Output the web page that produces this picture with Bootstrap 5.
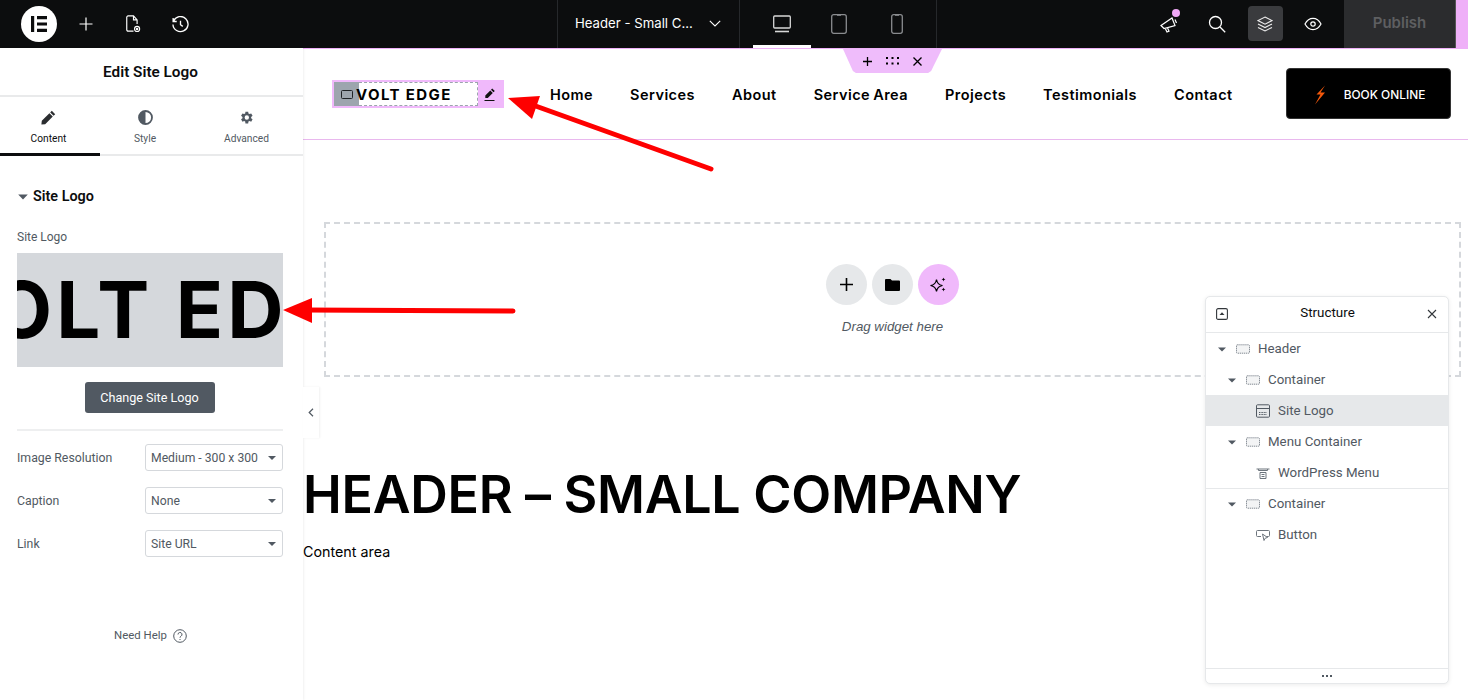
<!DOCTYPE html>
<html lang="en">
<head>
<meta charset="UTF-8">
<meta name="viewport" content="width=device-width, initial-scale=1.0">
<title>Edit Site Logo</title>
<link href="https://cdn.jsdelivr.net/npm/bootstrap@5.3.0/dist/css/bootstrap.min.css" rel="stylesheet">
<style>
body { font-family: Roboto, "Liberation Sans", sans-serif; background: #fff; overflow: hidden; }
.app-shell { height: 700px; position: relative; overflow: hidden; }

/* top bar */
.top-bar { height: 48px; background: #0c0d0e; color: #fff; }
.top-left { width: 557px; padding-left: 21px; gap: 13px; }
.logo-round { width: 36px; height: 36px; border-radius: 50%; background: #fff; margin-right: -1px; }
.top-tool { width: 34px; height: 32px; }
.doc-switch { width: 183px; height: 48px; border-left: 1px solid #26282b; border-right: 1px solid #26282b; padding: 0 18px 1px 17px; font-family: Inter, Roboto, sans-serif; font-size: 13.2px; }
.device-group { width: 197px; height: 48px; border-right: 1px solid #26282b; padding-left: 13px; }
.device-btn { width: 57.5px; height: 48px; position: relative; }
.device-btn.is-on::after { content: ""; position: absolute; left: 0; right: 0; bottom: 0; height: 3px; background: #fff; }
.tool-wrap { width: 48px; height: 48px; position: relative; padding-bottom: 1px; }
.tool-on { width: 35px; height: 35px; background: #3a3b3e; border-radius: 4px; }
.pink-dot { position: absolute; width: 8px; height: 8px; background: #f0a8f6; border-radius: 50%; top: 9px; left: 27px; }
.publish-box { width: 111px; height: 48px; background: #2b2c2e; color: #5e5f61; font-family: Inter, Roboto, sans-serif; font-weight: 600; font-size: 15px; margin-left: 7px; padding-bottom: 1px; }
.pink-end { width: 13px; height: 48px; background: #efb0f8; border-left: 1px solid #555; }

/* sidebar */
.work-area { height: 652px; }
.side-panel { width: 303px; flex-shrink: 0; background: #fff; color: #515962; font-size: 12px; box-shadow: 1px 0 2px rgba(0,0,0,.06); z-index: 2; }
.panel-title { height: 49px; border-bottom: 2px solid #e9eaeb; color: #0c0d0e; font-size: 15.3px; font-weight: 600; padding: 2px 2px 0 0; }
.panel-tabs { height: 59px; border-bottom: 2px solid #e9eaeb; }
.panel-tab { padding-top: 13px; font-size: 10.2px; position: relative; gap: 7px; line-height: 13px; }
.tab-a { width: 100px; padding-right: 3px; }
.tab-b { width: 90px; }
.tab-c { width: 113px; }
.panel-tab.is-on { color: #0c0d0e; }
.panel-tab.is-on::after { content: ""; position: absolute; left: 0; right: 0; bottom: -2px; height: 3px; background: #0c0d0e; }
.section-head { color: #0c0d0e; font-size: 14.4px; font-weight: 600; padding: 32px 17px 0 18px; line-height: 17px; gap: 5px; }
.field-name { padding: 24px 17px 0; font-size: 12px; line-height: 16px; }
.logo-preview { height: 114px; margin: 8px 20px 0 17px; background: #d5d8dc; overflow: hidden; white-space: nowrap; font-family: Inter, "Liberation Sans", sans-serif; font-weight: 700; font-size: 78px; letter-spacing: 4px; line-height: 114px; color: #000; text-indent: -84px; }
.change-wrap { margin-top: 15px; padding-right: 4px; }
.change-btn { width: 130px; height: 31px; background: #515962; color: #fff; border: 0; border-radius: 3px; font-size: 12.6px; padding: 1px 0 0; }
.change-btn:hover { background: #515962; color: #fff; }
.side-rule { border-top: 2px solid #eeeff0; margin: 16px 20px 13px 17px; }
.set-row { padding: 0 20px 0 17px; height: 27px; margin-bottom: 16px; }
.set-label { width: 128px; font-size: 12.3px; padding-top: 1px; }
.set-select { width: 138px; height: 27px; min-height: 27px; font-size: 12.2px; color: #515962; padding: 1px 18px 0 5px; border: 1px solid #d5d8dc; border-radius: 3px; background-image: url("data:image/svg+xml,%3Csvg xmlns='http://www.w3.org/2000/svg' viewBox='0 0 8 4'%3E%3Cpath d='M0 0h8L4 4z' fill='%23515962'/%3E%3C/svg%3E"); background-size: 8px 4px; background-position: right 6px center; font-family: Roboto, sans-serif; }
.help-line { margin-top: 70px; font-size: 11.4px; gap: 6px; padding-right: 2px; }

.collapse-tab { position: absolute; left: 303px; top: 387px; width: 16px; height: 51px; background: #fff; box-shadow: 1px 0 2px rgba(0,0,0,.06); z-index: 2; }

/* canvas */
.canvas-area { min-width: 0; position: relative; }
.site-header { height: 92px; border-top: 1px solid #efb0f8; border-bottom: 1px solid #e9b8ee; padding: 0 17px 0 29px; position: relative; }
.handle-tab { position: absolute; top: 0; left: 540px; width: 99px; height: 24px; background: #efbcfb; clip-path: polygon(0 0, 100% 0, 89% 92%, 86% 100%, 13% 100%, 10% 92%); gap: 14px; }
.logo-frame { width: 172px; height: 28px; background: #f0b9fb; padding: 2px; flex-shrink: 0; }
.logo-grip { width: 25px; height: 24px; background: #9da5ae; }
.logo-inner { width: 119px; height: 24px; background: #fff; border: 1px dashed #9da5ae; border-left: 0; font-family: Inter, "Liberation Sans", sans-serif; font-weight: 700; font-size: 15px; letter-spacing: 1.4px; color: #000; line-height: 24px; white-space: nowrap; }
.logo-word { margin-left: -3px; display: block; }
.logo-pen { flex: 1; }
.site-menu { margin: 2px 0 0 46px; gap: 37px; font-family: Inter, "Liberation Sans", sans-serif; font-weight: 600; font-size: 14.5px; letter-spacing: .45px; word-spacing: -1px; color: #000; white-space: nowrap; }
.book-btn { width: 165px; height: 51px; background: #000; color: #fff; border: 1px solid #333; border-radius: 4px; font-family: Inter, sans-serif; font-size: 11.9px; font-weight: 500; gap: 18px; margin: -2px 0 0 auto; padding: 3px 0 0 2px; flex-shrink: 0; }
.drop-zone { height: 155px; margin: 82px 7px 0 21px; border: 2px dashed #d5d8dc; padding-top: 40px; }
.drop-circle { width: 41px; height: 41px; border-radius: 50%; background: #e6e8ea; }
.drop-circle.is-pink { background: #f0b9fb; }
.drop-row { gap: 5px; }
.drop-hint { font-size: 13.3px; font-style: italic; color: #515962; margin-top: 14px; line-height: 16px; font-family: "Liberation Sans", sans-serif; }
.page-title { font-family: Inter, "Liberation Sans", sans-serif; font-weight: 600; font-size: 52px; letter-spacing: -.3px; line-height: 62px; margin: 87px 0 0; color: #000; white-space: nowrap; }
.page-copy { font-family: Inter, "Liberation Sans", sans-serif; font-size: 14.3px; margin: 16px 0 0; color: #000; line-height: 20px; }

/* structure window */
.tree-window { position: absolute; left: 1205px; top: 296px; width: 244px; height: 388px; background: #fff; border: 1px solid #e6e8ea; border-radius: 5px; box-shadow: 0 1px 4px rgba(0,0,0,.08); z-index: 3; color: #515962; font-size: 13.3px; }
.tree-head { height: 36px; border-bottom: 1px solid #e6e8ea; padding: 0 11px 2px 10px; color: #0c0d0e; font-size: 13.4px; }
.tree-row { height: 31px; gap: 8px; padding-top: 1px; }
.tree-row.is-picked { background: #e6e8ea; }
.tree-row.has-line { border-top: 1px solid #e6e8ea; padding-top: 0; }
.tree-caret { margin-right: 2px; }
.lvl-0 { padding-left: 12px; }
.lvl-1 { padding-left: 22px; }
.lvl-2 { padding-left: 50px; }
.tree-foot { position: absolute; left: 0; right: 0; bottom: 0; height: 15px; border-top: 1px solid #e6e8ea; }
.arrow-layer { position: absolute; left: 0; top: 0; z-index: 5; pointer-events: none; }
</style>
</head>
<body>
<svg width="0" height="0" class="d-block position-absolute">
  <symbol id="ico-box" viewBox="0 0 14 10"><rect x=".5" y=".8" width="13" height="8.400" rx=".8" fill="#f3f4f5" stroke="#838a92" stroke-dasharray="1.300 .7"/></symbol>
  <symbol id="ico-caret" viewBox="0 0 8 5"><path d="M0 .5h8L4 4.500z" fill="#515962"/></symbol>
</svg>

<div class="app-shell">
  <div class="top-bar d-flex align-items-center">
    <div class="top-left d-flex align-items-center">
      <div class="logo-round d-flex align-items-center justify-content-center">
        <svg width="16" height="16" viewBox="0 0 16 16"><path d="M0 0h3.200v16H0zM6 0h10v3.200H6zM6 6.400h10v3.200H6zM6 12.800h10V16H6z" fill="#0c0d0e"/></svg>
      </div>
      <div class="top-tool d-flex align-items-center justify-content-center">
        <svg width="14" height="14" viewBox="0 0 14 14"><path d="M7 .5v13M.5 7h13" stroke="#fff" stroke-width="1.200"/></svg>
      </div>
      <div class="top-tool d-flex align-items-center justify-content-center">
        <svg width="17" height="18" viewBox="0 0 18 20" fill="none" stroke="#fff" stroke-width="1.300"><path d="M9 18H3a1.500 1.500 0 0 1-1.500-1.500v-14A1.500 1.500 0 0 1 3 1h6l4 4.500V10M9 1v4.500h4"/><circle cx="13" cy="15.500" r="2.800"/><circle cx="13" cy="15.500" r=".7"/></svg>
      </div>
      <div class="top-tool d-flex align-items-center justify-content-center">
        <svg width="17" height="17" viewBox="0 0 18 18" fill="none" stroke="#fff" stroke-width="1.400"><path d="M1.600 5.500A8 8 0 1 1 1 9M1.200 2v3.800H5"/><path d="M9 5v4.200l2.400 1.800"/></svg>
      </div>
    </div>
    <div class="doc-switch d-flex align-items-center justify-content-between">
      <span>Header - Small C...</span>
      <svg width="12" height="7" viewBox="0 0 12 7" fill="none" stroke="#fff" stroke-width="1.100"><path d="M.8.800 6 6l5.200-5.200"/></svg>
    </div>
    <div class="device-group d-flex">
      <div class="device-btn is-on d-flex align-items-center justify-content-center">
        <svg width="18" height="18" viewBox="0 0 18 18" fill="none" stroke="#d8d8d8" stroke-width="1.300"><rect x=".7" y="1" width="16.600" height="12" rx="1"/><path d="M2 16.500h14" stroke-width="1.600"/></svg>
      </div>
      <div class="device-btn d-flex align-items-center justify-content-center">
        <svg width="16" height="20" viewBox="0 0 16 20" fill="none" stroke="#8a8c8f" stroke-width="1.300"><rect x=".7" y=".7" width="14.600" height="18.600" rx="2"/><path d="M6 1h4" stroke-width="1.600"/></svg>
      </div>
      <div class="device-btn d-flex align-items-center justify-content-center">
        <svg width="12" height="20" viewBox="0 0 12 20" fill="none" stroke="#8a8c8f" stroke-width="1.300"><rect x=".7" y=".7" width="10.600" height="18.600" rx="2"/><path d="M4 1h4" stroke-width="1.600"/></svg>
      </div>
    </div>
    <div class="d-flex align-items-center ms-auto">
      <div class="tool-wrap d-flex align-items-center justify-content-center">
        <svg width="18" height="18" viewBox="0 0 18 18" fill="none" stroke="#fff" stroke-width="1.200"><path d="M1 10.500 12 3l3 7.500-11 3zM5 13l2 4 2-.8-1.600-3.800M15 4.500l1.500 3.500"/></svg>
        <span class="pink-dot"></span>
      </div>
      <div class="tool-wrap d-flex align-items-center justify-content-center">
        <svg width="18" height="18" viewBox="0 0 18 18" fill="none" stroke="#fff" stroke-width="1.300"><circle cx="7.500" cy="7.500" r="6"/><path d="m12 12 5.200 5.200"/></svg>
      </div>
      <div class="tool-wrap d-flex align-items-center justify-content-center">
        <div class="tool-on d-flex align-items-center justify-content-center">
          <svg width="16" height="16" viewBox="0 0 16 16" fill="none" stroke="#eee" stroke-width="1.100"><path d="M8 1 15 4.600 8 8.200 1 4.600zM1 8l7 3.600L15 8M1 11.400 8 15l7-3.600"/></svg>
        </div>
      </div>
      <div class="tool-wrap d-flex align-items-center justify-content-center">
        <svg width="18" height="14" viewBox="0 0 18 14" fill="none" stroke="#fff" stroke-width="1.200"><path d="M1 7s3-5.600 8-5.600S17 7 17 7s-3 5.600-8 5.600S1 7 1 7z"/><circle cx="9" cy="7" r="2.200"/></svg>
      </div>
      <div class="publish-box d-flex align-items-center justify-content-center">Publish</div>
      <div class="pink-end"></div>
    </div>
  </div>

  <div class="work-area d-flex">
    <aside class="side-panel">
      <div class="panel-title d-flex align-items-center justify-content-center">Edit Site Logo</div>
      <div class="panel-tabs d-flex">
        <div class="panel-tab tab-a is-on d-flex flex-column align-items-center">
          <svg width="15" height="15" viewBox="0 0 15 15"><path d="M10.800.800 14.200 4.200 12.600 5.800 9.200 2.400zM8.400 3.200l3.400 3.400-7.600 7.600L.4 14.600l.4-3.800z" fill="#2b2d30"/></svg>
          <span>Content</span>
        </div>
        <div class="panel-tab tab-b d-flex flex-column align-items-center">
          <svg width="15" height="15" viewBox="0 0 15 15"><circle cx="7.500" cy="7.500" r="6.500" fill="none" stroke="#515962" stroke-width="1.800"/><path d="M7.500 1a6.500 6.500 0 0 0 0 13z" fill="#515962"/></svg>
          <span>Style</span>
        </div>
        <div class="panel-tab tab-c d-flex flex-column align-items-center">
          <svg width="15" height="15" viewBox="0 0 24 24"><path fill="#515962" d="M19.400 13a7.500 7.500 0 0 0 0-2l2.300-1.800-2.200-3.800-2.700 1.100a7.600 7.600 0 0 0-1.700-1L14.700 2.600h-4.400L9.900 5.500a7.600 7.600 0 0 0-1.700 1L5.500 5.400 3.300 9.200 5.600 11a7.500 7.500 0 0 0 0 2l-2.300 1.800 2.200 3.800 2.700-1.100a7.600 7.600 0 0 0 1.700 1l.4 2.900h4.400l.4-2.900a7.600 7.600 0 0 0 1.700-1l2.700 1.100 2.200-3.800zM12.500 15.500a3.500 3.500 0 1 1 0-7 3.500 3.500 0 0 1 0 7z"/></svg>
          <span>Advanced</span>
        </div>
      </div>
      <div class="section-head d-flex align-items-center">
        <svg width="10" height="6"><use href="#ico-caret"/></svg>
        <span>Site Logo</span>
      </div>
      <div class="field-name">Site Logo</div>
      <div class="logo-preview">VOLT EDGE</div>
      <div class="d-flex justify-content-center change-wrap">
        <button class="btn change-btn" type="button">Change Site Logo</button>
      </div>
      <div class="side-rule"></div>
      <div class="set-row d-flex align-items-center">
        <span class="set-label">Image Resolution</span>
        <select class="form-select set-select"><option>Medium - 300 x 300</option></select>
      </div>
      <div class="set-row d-flex align-items-center">
        <span class="set-label">Caption</span>
        <select class="form-select set-select"><option>None</option></select>
      </div>
      <div class="set-row d-flex align-items-center">
        <span class="set-label">Link</span>
        <select class="form-select set-select"><option>Site URL</option></select>
      </div>
      <div class="help-line d-flex align-items-center justify-content-center">
        <span>Need Help</span>
        <svg width="14" height="14" viewBox="0 0 14 14" fill="none" stroke="#515962"><circle cx="7" cy="7" r="6.300"/><path d="M5 5.500a2 2 0 1 1 3 1.700c-.7.4-1 .8-1 1.500M7 10v1"/></svg>
      </div>
    </aside>

    <div class="canvas-area flex-grow-1">
      <div class="site-header d-flex align-items-center">
        <div class="handle-tab d-flex align-items-center justify-content-center">
          <svg width="9" height="9" viewBox="0 0 9 9"><path d="M4.500 0v9M0 4.500h9" stroke="#000" stroke-width="1.300"/></svg>
          <svg width="13" height="8" viewBox="0 0 13 8" fill="#000"><path d="M0 0h2v2H0zM5.500 0h2v2h-2zM11 0h2v2h-2zM0 5.500h2v2H0zM5.500 5.500h2v2h-2zM11 5.500h2v2h-2z"/></svg>
          <svg width="9" height="9" viewBox="0 0 9 9"><path d="m.5.500 8 8M8.500.500l-8 8" stroke="#000" stroke-width="1.300"/></svg>
        </div>
        <div class="logo-frame d-flex">
          <div class="logo-grip d-flex align-items-center justify-content-center">
            <svg width="12" height="9" viewBox="0 0 12 9"><rect x=".5" y=".5" width="11" height="8" rx="1" fill="none" stroke="#1e2226"/></svg>
          </div>
          <div class="logo-inner"><span class="logo-word">VOLT EDGE</span></div>
          <div class="logo-pen d-flex align-items-center justify-content-center">
            <svg width="12" height="13" viewBox="0 0 12 13"><path d="M8.200.500 10.800 3 9.500 4.300 7 1.800zM6.300 2.500l2.500 2.500-5 5H1.300V7.500zM.5 12h10v1H.5z" fill="#111"/></svg>
          </div>
        </div>
        <div class="site-menu d-flex">
          <span>Home</span><span>Services</span><span>About</span><span>Service Area</span><span>Projects</span><span>Testimonials</span><span>Contact</span>
        </div>
        <button class="btn book-btn d-flex align-items-center justify-content-center" type="button">
          <svg width="12" height="20" viewBox="0 0 12 20"><path d="M11 .5 2.500 9.500h4L1 19.500 11 7.500H6.500z" fill="#f4580b"/></svg>
          <span>BOOK ONLINE</span>
        </button>
      </div>

      <div class="drop-zone d-flex flex-column align-items-center">
        <div class="d-flex drop-row">
          <div class="drop-circle d-flex align-items-center justify-content-center">
            <svg width="13" height="13" viewBox="0 0 13 13"><path d="M6.500 0v13M0 6.500h13" stroke="#000" stroke-width="1.600"/></svg>
          </div>
          <div class="drop-circle d-flex align-items-center justify-content-center">
            <svg width="15" height="12" viewBox="0 0 15 12"><path d="M1 0h4.500l1.500 1.500h7a1 1 0 0 1 1 1V11a1 1 0 0 1-1 1H1a1 1 0 0 1-1-1V1a1 1 0 0 1 1-1z" fill="#000"/></svg>
          </div>
          <div class="drop-circle is-pink d-flex align-items-center justify-content-center">
            <svg width="17" height="16" viewBox="0 0 17 16" fill="none" stroke="#000" stroke-width="1.200"><path d="M6.500 2.500c.6 3.800 2.200 5.400 6 6-3.800.6-5.400 2.200-6 6-.6-3.800-2.200-5.400-6-6 3.800-.6 5.400-2.200 6-6z"/><path d="M13.500.5c.2 1.200.8 1.800 2 2-1.200.2-1.800.8-2 2-.2-1.200-.8-1.800-2-2 1.200-.2 1.800-.8 2-2zM13.500 10.500c.2 1.200.8 1.800 2 2-1.200.2-1.800.8-2 2-.2-1.200-.8-1.800-2-2 1.200-.2 1.800-.8 2-2z" fill="#000" stroke="none"/></svg>
          </div>
        </div>
        <div class="drop-hint">Drag widget here</div>
      </div>

      <h1 class="page-title">HEADER – SMALL COMPANY</h1>
      <p class="page-copy">Content area</p>
    </div>
  </div>

  <div class="collapse-tab d-flex align-items-center justify-content-center">
    <svg width="6" height="9" viewBox="0 0 6 9" fill="none" stroke="#515962" stroke-width="1.200"><path d="M5 .8 1.200 4.500 5 8.200"/></svg>
  </div>

  <div class="tree-window">
    <div class="tree-head d-flex align-items-center justify-content-between">
      <svg width="12" height="12" viewBox="0 0 12 12"><rect x=".6" y=".6" width="10.800" height="10.800" rx="1.500" fill="none" stroke="#33373b" stroke-width="1.100"/><path d="M3.500 7 6 4.200 8.500 7z" fill="#33373b"/></svg>
      <span>Structure</span>
      <svg width="10" height="10" viewBox="0 0 10 10"><path d="m1 1 8 8M9 1 1 9" stroke="#33373b" stroke-width="1.100"/></svg>
    </div>
    <div class="tree-row lvl-0 d-flex align-items-center">
      <svg class="tree-caret" width="8" height="5"><use href="#ico-caret"/></svg>
      <svg width="14" height="10"><use href="#ico-box"/></svg>
      <span>Header</span>
    </div>
    <div class="tree-row lvl-1 d-flex align-items-center">
      <svg class="tree-caret" width="8" height="5"><use href="#ico-caret"/></svg>
      <svg width="14" height="10"><use href="#ico-box"/></svg>
      <span>Container</span>
    </div>
    <div class="tree-row is-picked lvl-2 d-flex align-items-center">
      <svg width="14" height="14" viewBox="0 0 14 14" fill="none" stroke="#515962"><rect x=".5" y=".8" width="13" height="12.400" rx="1"/><path d="M1 4.500h12"/><path d="M3 8.500h8M3 10.500h8" stroke-dasharray="1 .6"/></svg>
      <span>Site Logo</span>
    </div>
    <div class="tree-row lvl-1 d-flex align-items-center">
      <svg class="tree-caret" width="8" height="5"><use href="#ico-caret"/></svg>
      <svg width="14" height="10"><use href="#ico-box"/></svg>
      <span>Menu Container</span>
    </div>
    <div class="tree-row lvl-2 d-flex align-items-center">
      <svg width="14" height="11" viewBox="0 0 14 11" fill="none" stroke="#6d757d"><path d="M.5 1h13M2.500 1v1.500h9V1M4 4.500h6v6H4zM5.500 6.500h3M5.500 8.500h3"/></svg>
      <span>WordPress Menu</span>
    </div>
    <div class="tree-row has-line lvl-1 d-flex align-items-center">
      <svg class="tree-caret" width="8" height="5"><use href="#ico-caret"/></svg>
      <svg width="14" height="10"><use href="#ico-box"/></svg>
      <span>Container</span>
    </div>
    <div class="tree-row lvl-2 d-flex align-items-center">
      <svg width="14" height="11" viewBox="0 0 14 11" fill="none" stroke="#6d757d"><path d="M5 6.500H1.500a1 1 0 0 1-1-1v-4a1 1 0 0 1 1-1h11a1 1 0 0 1 1 1v4a1 1 0 0 1-1 1h-2"/><path d="m6.500 4 1.500 6.500 1.200-2.300 2.300-.7z"/></svg>
      <span>Button</span>
    </div>
    <div class="tree-foot d-flex align-items-center justify-content-center">
      <svg width="10" height="2" viewBox="0 0 10 2" fill="#515962"><path d="M0 0h2v2H0zM4 0h2v2H4zM8 0h2v2H8z"/></svg>
    </div>
  </div>

  <svg class="arrow-layer" width="1468" height="700" viewBox="0 0 1468 700">
    <path d="M711 169 530 104" stroke="#fe0000" stroke-width="5" stroke-linecap="round" fill="none"/>
    <path d="M508 98 540 96 532 119z" fill="#fe0000"/>
    <path d="M513 311 305 310" stroke="#fe0000" stroke-width="5" stroke-linecap="round" fill="none"/>
    <path d="M283 310 312 298 312 323z" fill="#fe0000"/>
  </svg>
</div>
</body>
</html>
